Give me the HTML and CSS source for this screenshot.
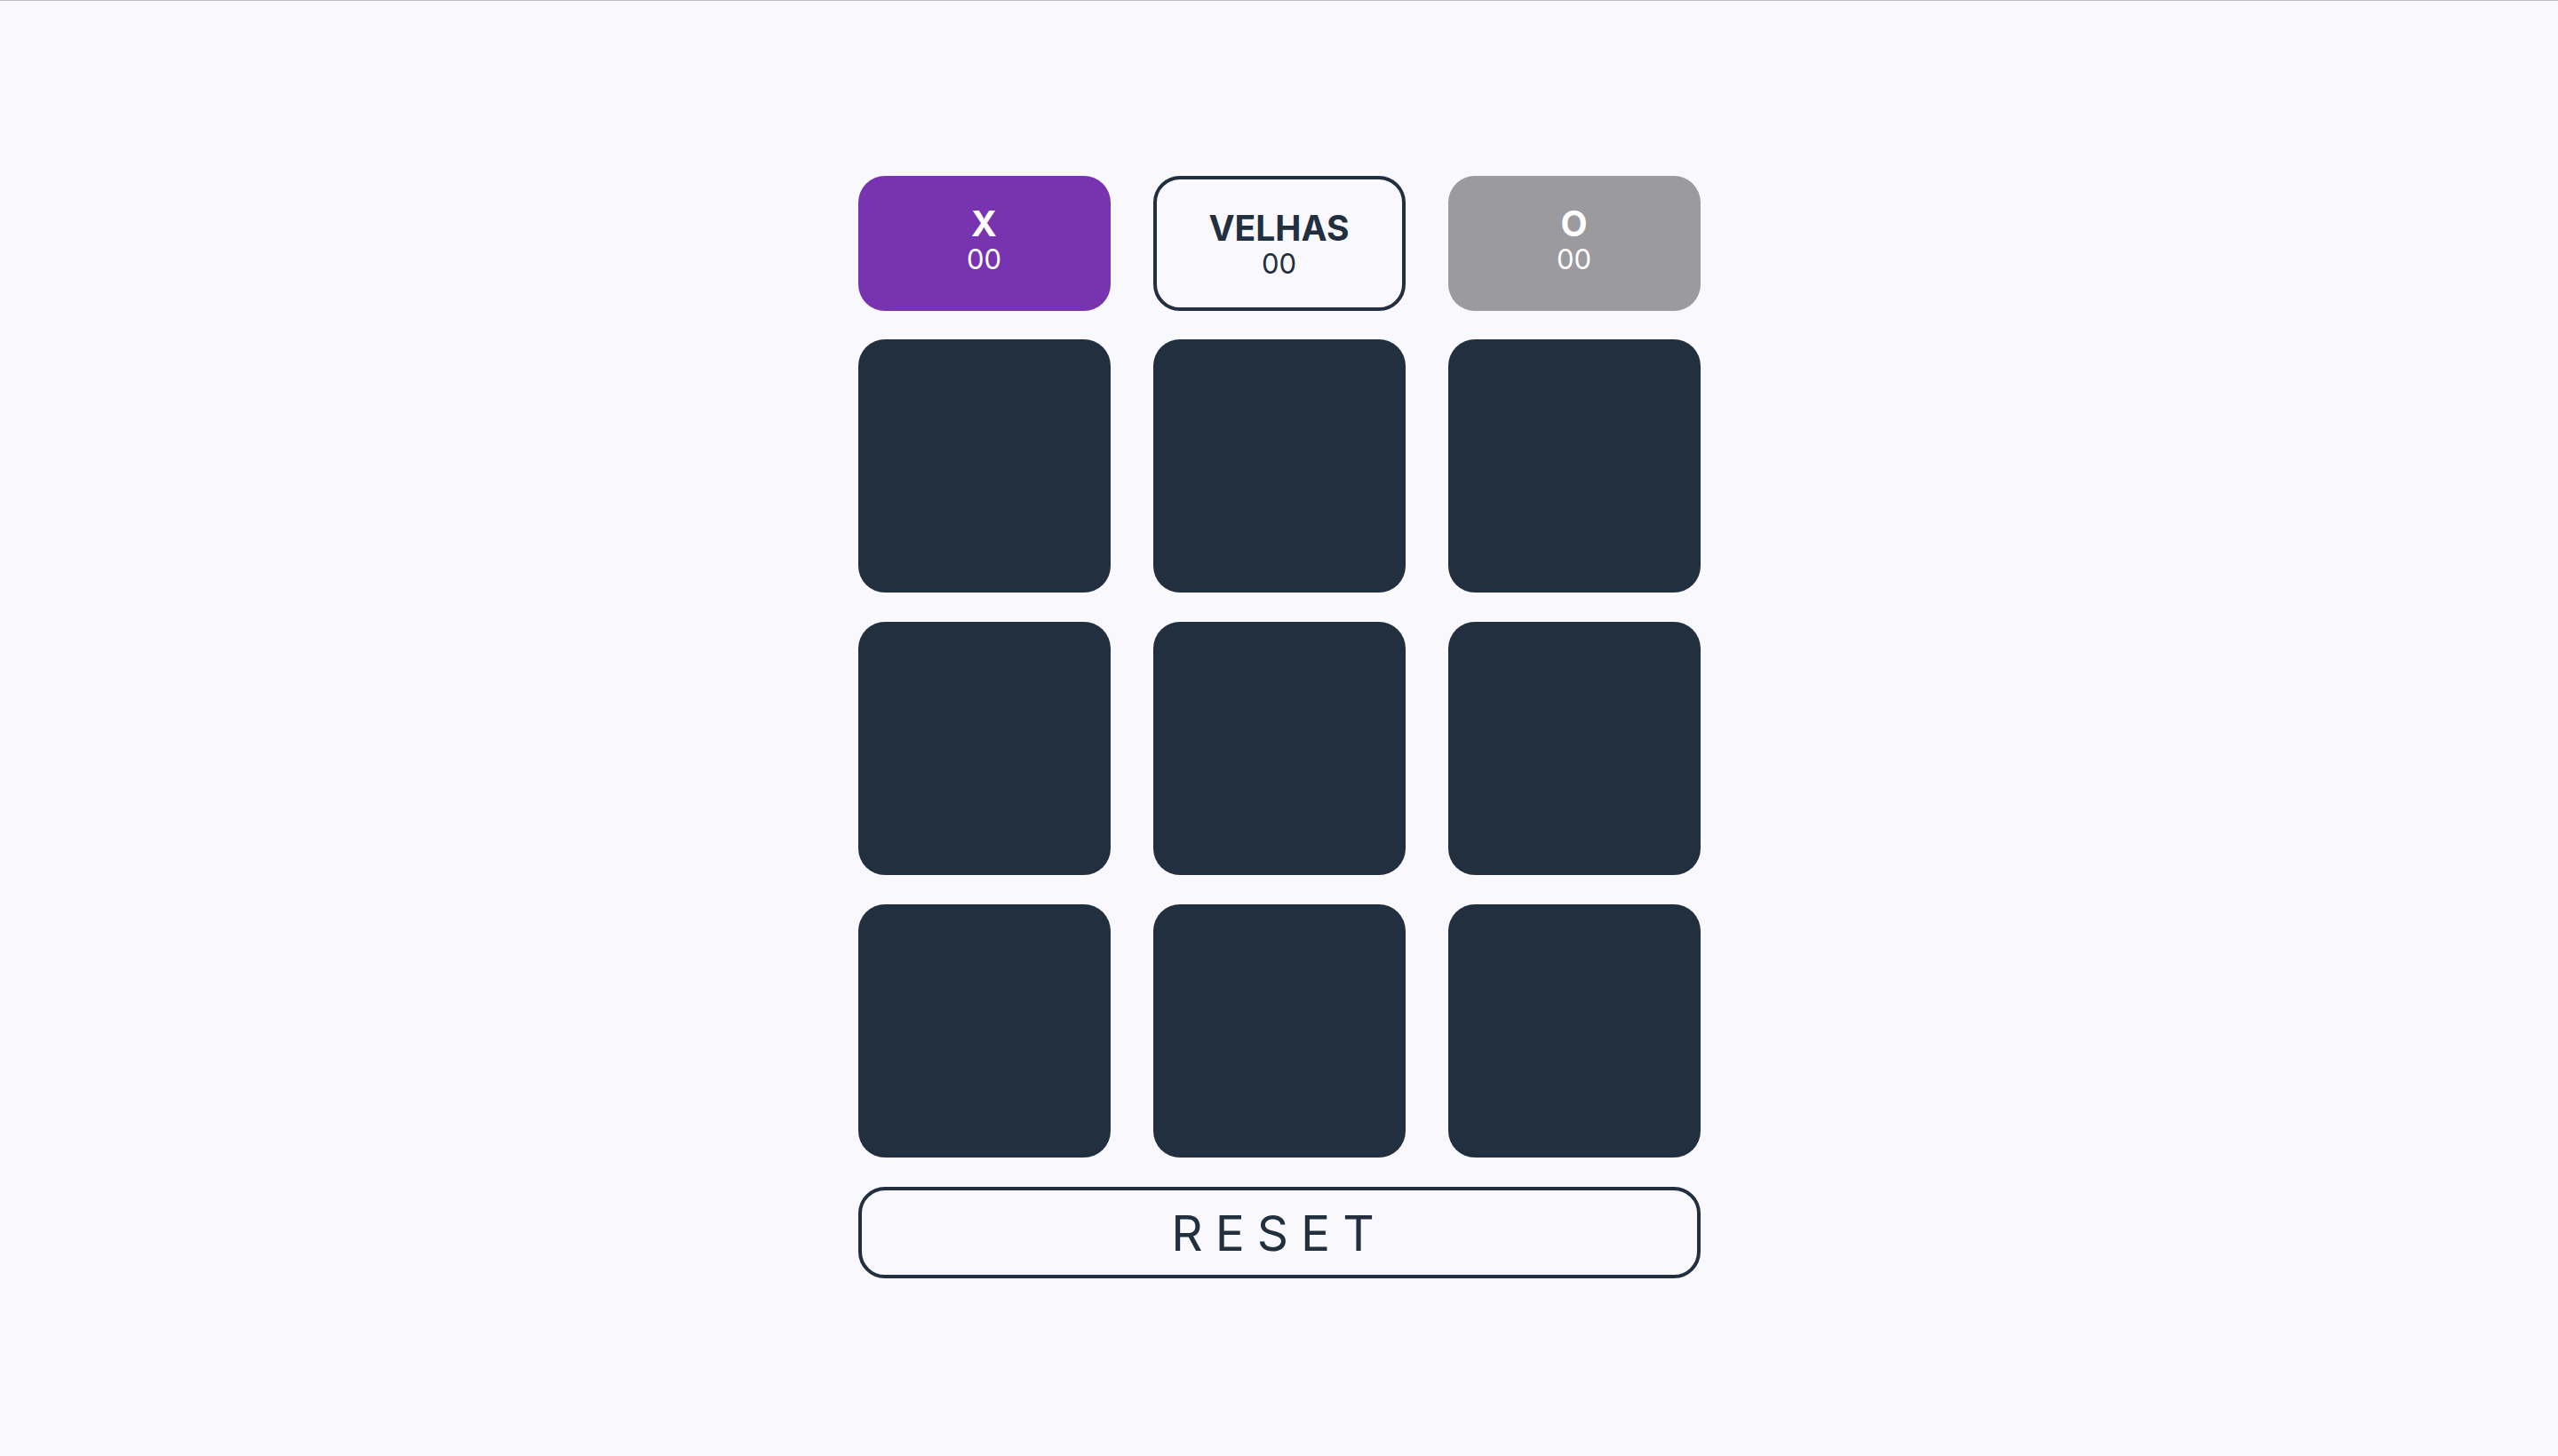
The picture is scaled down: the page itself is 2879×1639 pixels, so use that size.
FILE: index.html
```html
<!DOCTYPE html>
<html lang="pt-BR">
<head>
<meta charset="utf-8">
<title>Jogo da Velha</title>
<link rel="stylesheet" href="styles.css">
</head>
<body>
<div class="topline"></div>
<main class="game">
  <section class="scores">
    <div class="score score-x">
      <span class="score-title">X</span>
      <span class="score-value">00</span>
    </div>
    <div class="score score-draw">
      <span class="score-title">VELHAS</span>
      <span class="score-value">00</span>
    </div>
    <div class="score score-o">
      <span class="score-title">O</span>
      <span class="score-value">00</span>
    </div>
  </section>
  <section class="board">
    <button class="cell"></button>
    <button class="cell"></button>
    <button class="cell"></button>
    <button class="cell"></button>
    <button class="cell"></button>
    <button class="cell"></button>
    <button class="cell"></button>
    <button class="cell"></button>
    <button class="cell"></button>
  </section>
  <button class="reset">RESET</button>
</main>
</body>
</html>
```
FILE: styles.css
```css
* { box-sizing: border-box; }

html, body {
  margin: 0;
  padding: 0;
  background: #f9f8fd;
}

body {
  min-height: 1639px;
  font-family: Inter, "Liberation Sans", Arial, sans-serif;
  color: #222f3f;
}

.topline {
  height: 1px;
  background: #bdbac4;
}

.game {
  width: 948px;
  margin: 197px auto 0;
  display: flex;
  flex-direction: column;
  gap: 32px;
}

.scores {
  display: grid;
  grid-template-columns: repeat(3, 284px);
  column-gap: 48px;
}

.score {
  height: 152px;
  border-radius: 30px;
  display: flex;
  flex-direction: column;
  align-items: center;
  justify-content: center;
  padding-bottom: 10px;
}

.score-title {
  display: block;
  font-size: 39px;
  font-weight: 700;
  line-height: normal;
}

.score-value {
  display: block;
  font-size: 31px;
  font-weight: 400;
  line-height: normal;
  margin-top: -2px;
}

.score-x {
  background: #7733b0;
  color: #ffffff;
}

.score-draw {
  border: 4px solid #222f3f;
  color: #222f3f;
  padding-bottom: 0;
}

.score-o {
  background: #9b9a9f;
  color: #ffffff;
}

.board {
  display: grid;
  grid-template-columns: repeat(3, 284px);
  grid-auto-rows: 285px;
  column-gap: 48px;
  row-gap: 33px;
}

.cell {
  border: none;
  margin: 0;
  padding: 0;
  background: #222f3f;
  border-radius: 30px;
  cursor: pointer;
}

.reset {
  margin-top: 1px;
  height: 103px;
  width: 948px;
  background: transparent;
  border: 4px solid #222f3f;
  border-radius: 30px;
  font-family: Inter, "Liberation Sans", Arial, sans-serif;
  font-size: 55px;
  font-weight: 400;
  letter-spacing: 14px;
  padding: 0;
  color: #222f3f;
  cursor: pointer;
}
```
